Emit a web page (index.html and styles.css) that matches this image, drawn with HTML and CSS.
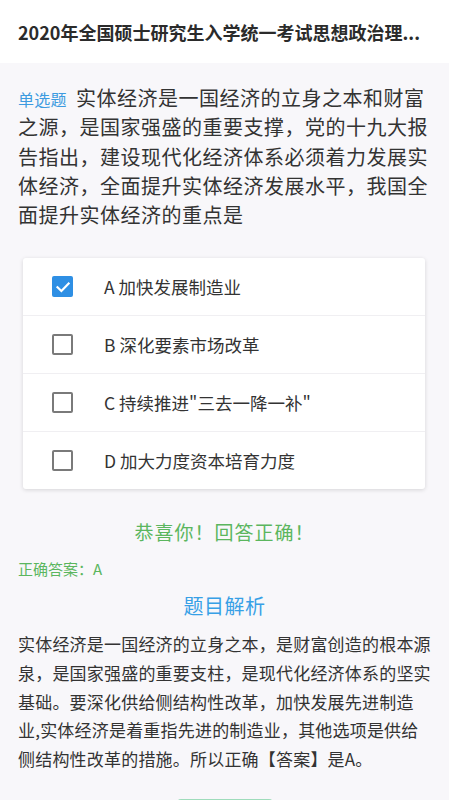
FILE: index.html
```html
<!DOCTYPE html>
<html lang="zh">
<head>
<meta charset="utf-8">
<link rel="stylesheet" href="styles.css">
</head>
<body>
<header class="top">
  <h1 class="title">2020年全国硕士研究生入学统一考试思想政治理...</h1>
</header>
<main class="content">
  <p class="question"><span class="tag">单选题</span>实体经济是一国经济的立身之本和财富之源，是国家强盛的重要支撑，党的十九大报告指出，建设现代化经济体系必须着力发展实体经济，全面提升实体经济发展水平，我国全面提升实体经济的重点是</p>
  <ul class="options">
    <li class="option"><span class="box checked"><svg viewBox="0 0 20 20" width="20" height="20"><path d="M4.5 10.2 L8.4 14 L15.6 6.6" fill="none" stroke="#fff" stroke-width="2.2" stroke-linecap="square"/></svg></span><span class="label">A 加快发展制造业</span></li>
    <li class="option"><span class="box"></span><span class="label">B 深化要素市场改革</span></li>
    <li class="option"><span class="box"></span><span class="label">C 持续推进"三去一降一补"</span></li>
    <li class="option"><span class="box"></span><span class="label">D 加大力度资本培育力度</span></li>
  </ul>
  <p class="result">恭喜你！回答正确！</p>
  <p class="answer">正确答案：A</p>
  <h2 class="analysis-title">题目解析</h2>
  <p class="analysis">实体经济是一国经济的立身之本，是财富创造的根本源泉，是国家强盛的重要支柱，是现代化经济体系的坚实基础。要深化供给侧结构性改革，加快发展先进制造业,实体经济是着重指先进的制造业，其他选项是供给侧结构性改革的措施。所以正确【答案】是A。</p>
  <div class="btn-row"><span class="btn"></span></div>
</main>
</body>
</html>
```

FILE: styles.css
```css
html, body {
  margin: 0;
  padding: 0;
}
body {
  background: #f8f7fa;
  font-family: "Noto Sans CJK SC", "Noto Sans", sans-serif;
  color: #333;
}
.top {
  background: #fff;
  height: 63px;
  display: flex;
  align-items: center;
  padding: 0 18px;
}
.title {
  margin: 0;
  font-size: 18px;
  font-weight: 700;
  color: #2b2b2b;
  white-space: nowrap;
}
.content {
  padding: 0 18px;
}
.question {
  margin: 20px 0 0;
  font-size: 20px;
  letter-spacing: 0.5px;
  line-height: 29.3px;
  color: #333;
}
.tag {
  display: inline-block;
  font-size: 16px;
  line-height: 20px;
  color: #3d9be0;
  letter-spacing: 0.3px;
  margin-right: 9px;
}
.options {
  list-style: none;
  margin: 29px 6px 0 5px;
  padding: 0;
  background: #fff;
  border-radius: 3px;
  box-shadow: 0 1px 4px rgba(0,0,0,0.14);
}
.option {
  display: flex;
  align-items: center;
  height: 57px;
  border-top: 1px solid #f0eff2;
  padding-left: 29px;
}
.option:first-child {
  border-top: none;
}
.box {
  width: 17px;
  height: 17px;
  border: 2px solid #7a7a7a;
  border-radius: 2px;
  display: flex;
  align-items: center;
  justify-content: center;
  flex: none;
}
.box.checked {
  width: 21px;
  height: 21px;
  border: none;
  background: #2e8fe4;
}
.label {
  margin-left: 31px;
  font-size: 17.5px;
  color: #333;
}
.result {
  margin: 29px 0 0;
  text-align: center;
  font-size: 19px;
  color: #5bb65e;
  letter-spacing: 1px;
}
.answer {
  margin: 13px 0 0;
  font-size: 15px;
  color: #5bb65e;
}
.analysis-title {
  margin: 12px 0 0;
  text-align: center;
  font-size: 20px;
  font-weight: 400;
  color: #37a0e6;
  letter-spacing: 0.5px;
}
.analysis {
  margin: 10px 0 0;
  font-size: 17px;
  letter-spacing: 0.2px;
  line-height: 28.6px;
  color: #333;
}
.btn-row {
  display: flex;
  justify-content: center;
  margin-top: 26px;
}
.btn {
  width: 98px;
  height: 40px;
  background: #9fdcbb;
  border-radius: 5px;
}
```
